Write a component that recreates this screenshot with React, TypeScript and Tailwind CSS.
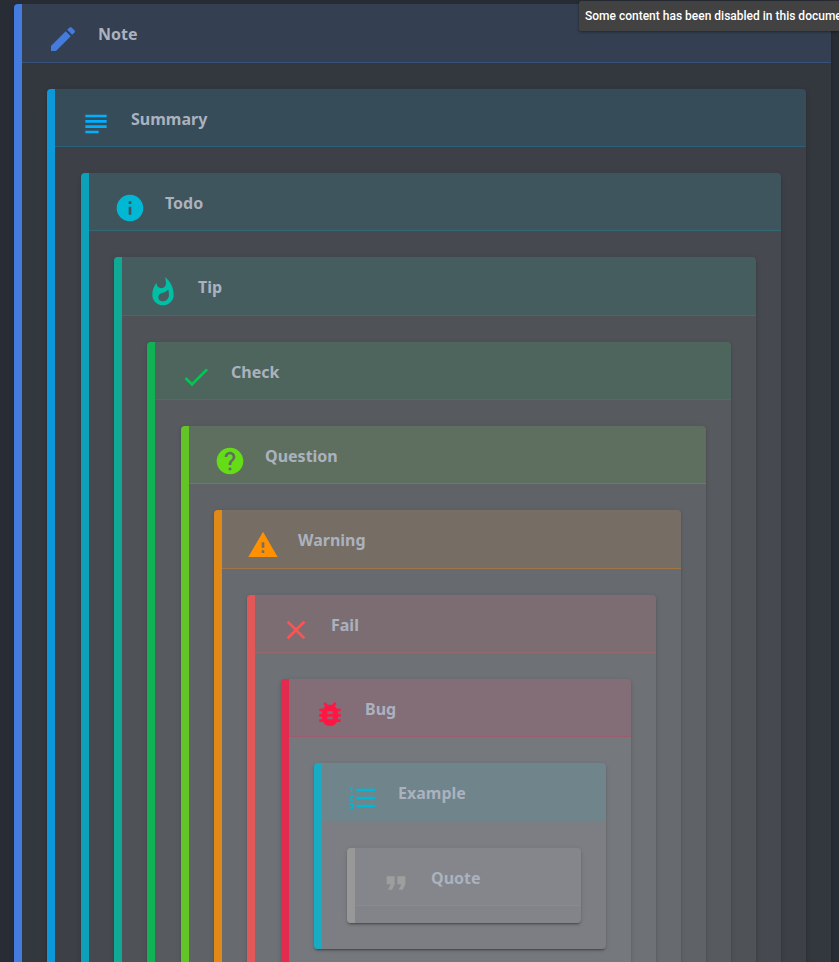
import type { ReactNode } from "react";
import type { IconType } from "react-icons";
import {
  MdBugReport,
  MdCheck,
  MdClose,
  MdEdit,
  MdFormatListNumbered,
  MdFormatQuote,
  MdHelp,
  MdInfo,
  MdSubject,
  MdWarning,
  MdWhatshot,
} from "react-icons/md";

type Callout = {
  title: string;
  Icon: IconType;
  bar: string;
  header: string;
  icon: string;
};

const callouts: Callout[] = [
  { title: "Note", Icon: MdEdit, bar: "border-l-[#437cde]", header: "bg-[#448aff]/10 border-b-[#448aff]/25", icon: "text-[#437cde]" },
  { title: "Summary", Icon: MdSubject, bar: "border-l-[#00b0ff]/80", header: "bg-[#00b0ff]/10 border-b-[#00b0ff]/20", icon: "text-[#00b0ff]" },
  { title: "Todo", Icon: MdInfo, bar: "border-l-[#00b8d4]/80", header: "bg-[#00b8d4]/10 border-b-[#00b8d4]/20", icon: "text-[#00b8d4]" },
  { title: "Tip", Icon: MdWhatshot, bar: "border-l-[#00bfa5]/80", header: "bg-[#00bfa5]/10 border-b-[#00bfa5]/20", icon: "text-[#00bfa5]" },
  { title: "Check", Icon: MdCheck, bar: "border-l-[#00c853]/80", header: "bg-[#00c853]/10 border-b-[#00c853]/20", icon: "text-[#00c853]" },
  { title: "Question", Icon: MdHelp, bar: "border-l-[#64dd17]/80", header: "bg-[#64dd17]/10 border-b-[#64dd17]/20", icon: "text-[#64dd17]" },
  { title: "Warning", Icon: MdWarning, bar: "border-l-[#ff9100]/80", header: "bg-[#ff9100]/10 border-b-[#ff9100]/30", icon: "text-[#ff9100]" },
  { title: "Fail", Icon: MdClose, bar: "border-l-[#ff5252]/80", header: "bg-[#ff5252]/10 border-b-[#ff5252]/20", icon: "text-[#ff5252]" },
  { title: "Bug", Icon: MdBugReport, bar: "border-l-[#ff1744]/80", header: "bg-[#ff1744]/10 border-b-[#ff1744]/20", icon: "text-[#ff1744]" },
  { title: "Example", Icon: MdFormatListNumbered, bar: "border-l-[#00b8d4]/80", header: "bg-[#00b8d4]/10 border-b-[#00b8d4]/20", icon: "text-[#00b8d4]" },
  { title: "Quote", Icon: MdFormatQuote, bar: "border-l-[#9e9e9e]/80", header: "bg-[#9e9e9e]/10 border-b-[#9e9e9e]/20", icon: "text-[#9e9e9e]" },
];

function CalloutBox({ level }: { level: number }) {
  const { title, Icon, bar, header, icon } = callouts[level];
  const hasChild = level + 1 < callouts.length;
  const headerHeight = level % 3 === 0 ? "h-[59px]" : "h-[58px]";
  const indent = level % 3 === 1 ? "pl-[26px]" : "pl-[25px]";
  const body: ReactNode = hasChild ? (
    <div className={`${indent} pr-[25px] py-[26px]`}>
      <CalloutBox level={level + 1} />
    </div>
  ) : (
    <div className="h-[17px]" />
  );

  return (
    <section
      className={`overflow-hidden rounded-[4px] border-l-8 bg-white/5 shadow-[0_2px_2px_0_rgba(0,0,0,0.14),0_1px_5px_0_rgba(0,0,0,0.12),0_3px_1px_-2px_rgba(0,0,0,0.2)] ${bar}`}
    >
      <header className={`flex items-start border-b pl-[25px] pt-[18px] ${headerHeight} ${header}`}>
        <Icon className={`mt-px size-8 shrink-0 ${icon}`} aria-hidden="true" />
        <h2 className="ml-[19px] text-base leading-6 font-bold text-[#abb2bf]">{title}</h2>
      </header>
      {body}
    </section>
  );
}

export default function App() {
  return (
    <div className="relative h-screen overflow-hidden bg-[#282c34] font-['Noto_Sans',sans-serif]">
      <main className="pt-1 pr-2 pl-[14px]">
        <CalloutBox level={0} />
      </main>
      <div
        role="status"
        className="absolute top-px left-[579px] rounded-[2px] bg-[#424242] px-1.5 py-[7px] font-['Roboto',sans-serif] text-[12px] leading-4 font-medium whitespace-nowrap text-white shadow-[0_1px_3px_rgba(0,0,0,0.4)]"
      >
        Some content has been disabled in this document
      </div>
    </div>
  );
}
